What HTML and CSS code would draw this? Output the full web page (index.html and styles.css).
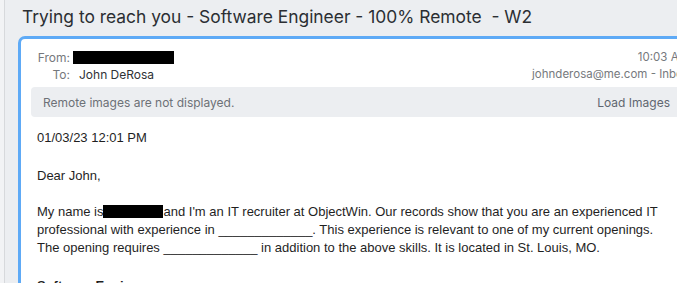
FILE: index.html
```html
<!DOCTYPE html>
<html>
<head>
<meta charset="utf-8">
<link rel="stylesheet" href="styles.css">
</head>
<body>
<div class="page">
  <div class="strip"></div>
  <div class="main">
    <h1 class="subject">Trying to reach you - Software Engineer - 100% Remote &nbsp;- W2</h1>
    <div class="card">
      <div class="header">
        <div class="rows">
          <div class="row">
            <span class="label">From:</span>
            <span class="redact redact-from"></span>
          </div>
          <div class="row">
            <span class="label">To:</span>
            <span class="value">John DeRosa</span>
          </div>
        </div>
        <div class="meta">
          <div class="meta-line">10:03 AM</div>
          <div class="meta-line">johnderosa@me.com - Inbox</div>
        </div>
      </div>
      <div class="banner">
        <span class="banner-text">Remote images are not displayed.</span>
        <span class="load">Load Images</span>
      </div>
      <div class="body">
        <p class="para para-date">01/03/23 12:01 PM</p>
        <p class="para">Dear John,</p>
        <p class="para para-last">My name is<span class="redact redact-name"></span>and I'm an IT recruiter at ObjectWin. Our records show that you are an experienced IT<br>professional with experience in _____________. This experience is relevant to one of my current openings.<br>The opening requires _____________ in addition to the above skills. It is located in St. Louis, MO.</p>
        <p class="para bold">Software Engineer</p>
      </div>
    </div>
  </div>
</div>
</body>
</html>
```

FILE: styles.css
```css
html, body {
  margin: 0;
  padding: 0;
  width: 677px;
  height: 283px;
  overflow: hidden;
  background: #eceef1;
}

.page {
  display: flex;
  height: 283px;
}

.strip {
  width: 4px;
  flex: none;
  background: #f2f3f5;
  border-right: 1px solid #d7d9dc;
}

.main {
  flex: none;
  width: 700px;
  padding-left: 13px;
}

.subject {
  margin: 0;
  padding: 6px 0 0 4px;
  height: 30px;
  box-sizing: border-box;
  font-family: Inter, "Noto Sans", sans-serif;
  font-weight: 400;
  font-size: 17.4px;
  line-height: 22px;
  color: #2b2e33;
  white-space: nowrap;
}

.card {
  margin-top: 6px;
  width: 684px;
  height: 400px;
  box-sizing: border-box;
  background: #ffffff;
  border: 3px solid #5eaaf6;
  border-radius: 7px;
  padding: 0 10px;
}

.header {
  display: flex;
  justify-content: space-between;
  padding-top: 10px;
  font-family: Inter, "Noto Sans", sans-serif;
  font-size: 12px;
  line-height: 17px;
}

.rows {
  display: flex;
  flex-direction: column;
}

.row {
  display: flex;
  align-items: center;
}

.label {
  width: 39px;
  text-align: right;
  color: #75787c;
}

.value {
  margin-left: 9px;
  color: #2f3236;
}

.redact {
  display: inline-block;
  background: #000;
}

.redact-from {
  width: 101px;
  height: 13px;
  margin-left: 3px;
}

.meta {
  text-align: right;
  color: #76797d;
  font-size: 11.5px;
}

.banner {
  margin-top: 4px;
  height: 30px;
  display: flex;
  align-items: center;
  justify-content: space-between;
  background: #eceef1;
  border-radius: 4px;
  padding: 0 12px;
  font-family: Inter, "Noto Sans", sans-serif;
  font-size: 12px;
  color: #6d7177;
}

.load {
  padding: 0 7px;
  color: #5f6670;
}

.body {
  padding: 12px 0 0 6px;
  font-family: "Liberation Sans", Arial, sans-serif;
  font-size: 13px;
  line-height: 18px;
  color: #1f1f1f;
}

.para {
  margin: 0 0 18px;
  white-space: nowrap;
}

.para-date {
  margin-bottom: 20px;
}

.para-last {
  margin-bottom: 20px;
}

.redact-name {
  width: 60px;
  height: 13px;
  vertical-align: -2px;
}

.bold {
  font-weight: 700;
}
```
